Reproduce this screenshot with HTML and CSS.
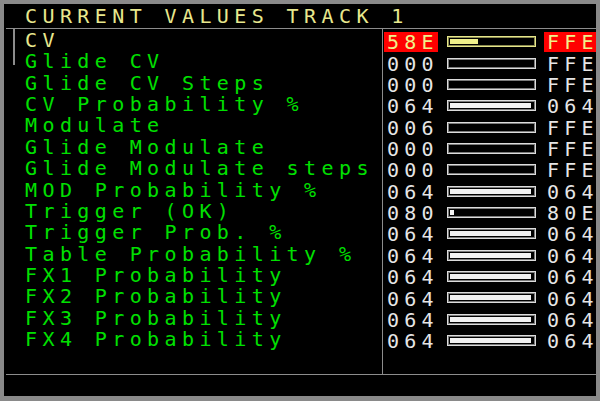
FILE: index.html
```html
<!DOCTYPE html>
<html lang="en">
<head>
    <meta charset="UTF-8">
    <title>Current Values Track 1</title>
    <link rel="stylesheet" href="styles.css">
</head>
<body>
    <div class="screen">
        <div class="title">CURRENT VALUES TRACK 1</div>
        <div class="main">
            <div class="labels">
                <div class="scroll"></div>
                <div class="row sel">CV</div>
                <div class="row">Glide CV</div>
                <div class="row">Glide CV Steps</div>
                <div class="row">CV Probability %</div>
                <div class="row">Modulate</div>
                <div class="row">Glide Modulate</div>
                <div class="row">Glide Modulate steps</div>
                <div class="row">MOD Probability %</div>
                <div class="row">Trigger (OK)</div>
                <div class="row">Trigger Prob. %</div>
                <div class="row">Table Probability %</div>
                <div class="row">FX1 Probability</div>
                <div class="row">FX2 Probability</div>
                <div class="row">FX3 Probability</div>
                <div class="row">FX4 Probability</div>
            </div>
            <div class="values">
                <div class="vrow sel"><span class="val">58E</span><span class="bar"><span class="fill" style="width:34%"></span></span><span class="max">FFE</span></div>
                <div class="vrow"><span class="val">000</span><span class="bar"><span class="fill" style="width:0%"></span></span><span class="max">FFE</span></div>
                <div class="vrow"><span class="val">000</span><span class="bar"><span class="fill" style="width:0%"></span></span><span class="max">FFE</span></div>
                <div class="vrow"><span class="val">064</span><span class="bar"><span class="fill" style="width:97%"></span></span><span class="max">064</span></div>
                <div class="vrow"><span class="val">006</span><span class="bar"><span class="fill" style="width:0%"></span></span><span class="max">FFE</span></div>
                <div class="vrow"><span class="val">000</span><span class="bar"><span class="fill" style="width:0%"></span></span><span class="max">FFE</span></div>
                <div class="vrow"><span class="val">000</span><span class="bar"><span class="fill" style="width:0%"></span></span><span class="max">FFE</span></div>
                <div class="vrow"><span class="val">064</span><span class="bar"><span class="fill" style="width:97%"></span></span><span class="max">064</span></div>
                <div class="vrow"><span class="val">080</span><span class="bar"><span class="fill" style="width:5%"></span></span><span class="max">80E</span></div>
                <div class="vrow"><span class="val">064</span><span class="bar"><span class="fill" style="width:97%"></span></span><span class="max">064</span></div>
                <div class="vrow"><span class="val">064</span><span class="bar"><span class="fill" style="width:97%"></span></span><span class="max">064</span></div>
                <div class="vrow"><span class="val">064</span><span class="bar"><span class="fill" style="width:97%"></span></span><span class="max">064</span></div>
                <div class="vrow"><span class="val">064</span><span class="bar"><span class="fill" style="width:97%"></span></span><span class="max">064</span></div>
                <div class="vrow"><span class="val">064</span><span class="bar"><span class="fill" style="width:97%"></span></span><span class="max">064</span></div>
                <div class="vrow"><span class="val">064</span><span class="bar"><span class="fill" style="width:97%"></span></span><span class="max">064</span></div>
            </div>
        </div>
        <div class="footer"></div>
    </div>
</body>
</html>
```

FILE: styles.css
```css
body {
    margin: 0;
    background-color: #8a8a8a;
    font-family: "DejaVu Sans Mono", monospace;
    font-size: 20px;
}
.screen {
    margin: 4px;
    width: 592px;
    height: 392px;
    background: #000000;
    display: flex;
    flex-direction: column;
    overflow: hidden;
}
.title {
    height: 23px;
    line-height: 23px;
    padding-top: 1px;
    margin-left: 2px;
    padding-left: 19px;
    color: #e8e88e;
    letter-spacing: 5.4px;
    white-space: nowrap;
    border-bottom: 1px solid #8c8c8c;
}
.main {
    display: grid;
    grid-template-columns: 377px 1fr;
    height: 345px;
    border-bottom: 1px solid #8c8c8c;
    margin-left: 2px;
}
.labels {
    position: relative;
    padding-top: 1px;
    padding-left: 19px;
    border-right: 1px solid #8c8c8c;
    color: #00e000;
    letter-spacing: 5.4px;
    white-space: nowrap;
}
.scroll {
    position: absolute;
    left: 7px;
    top: 0;
    width: 2px;
    height: 36px;
    background: #8c8c8c;
}
.row {
    height: 21.36px;
    line-height: 21.36px;
}
.row.sel {
    color: #e8e88e;
}
.values {
    padding-top: 1px;
    color: #e6e6e6;
    letter-spacing: 5.2px;
    white-space: nowrap;
    overflow: hidden;
}
.vrow {
    height: 21.36px;
    line-height: 21.36px;
    display: flex;
    align-items: center;
}
.val, .max {
    display: inline-block;
    height: 20px;
    line-height: 20px;
    padding-left: 3px;
    margin-top: 3px;
}
.val {
    flex-shrink: 0;
    width: 51px;
    margin-left: 1px;
}
.max {
    flex: 1;
    margin-left: 8px;
}
.bar {
    display: inline-block;
    flex-shrink: 0;
    box-sizing: border-box;
    width: 89px;
    height: 11px;
    margin-left: 9px;
    margin-top: 2px;
    padding: 2px;
    border: 1px solid #dcdcdc;
    box-shadow: inset 0 0 0 1px #7a7a7a;
}
.fill {
    display: block;
    height: 100%;
    background: #f2f2f2;
}
.vrow.sel .val, .vrow.sel .max {
    background: #ff0000;
    color: #f0f08a;
}
.vrow.sel .bar {
    border-color: #e6e68a;
    box-shadow: inset 0 0 0 1px #8a8a50;
}
.vrow.sel .fill {
    background: #f0f08a;
}
.footer {
    flex: 1;
}
```
